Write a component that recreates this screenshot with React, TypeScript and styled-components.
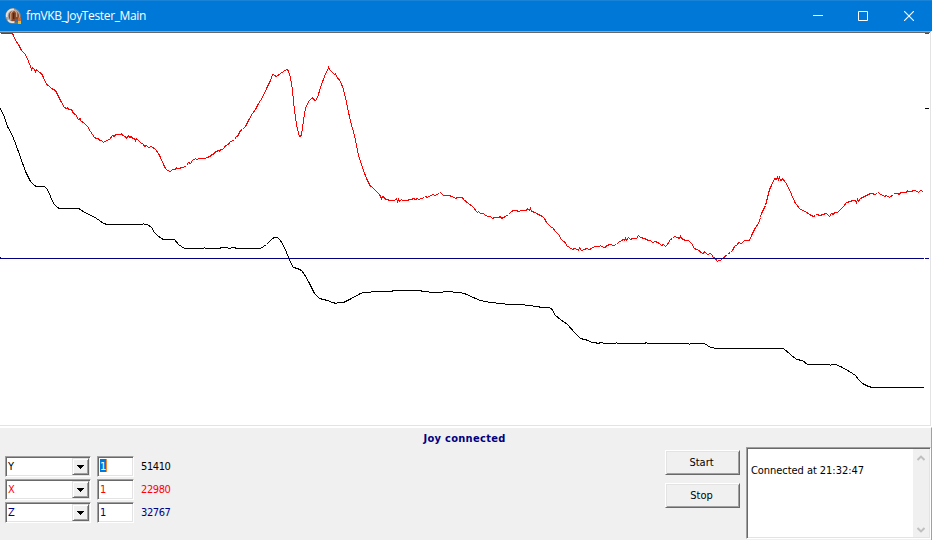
import React from "react";
import styled, { createGlobalStyle } from "styled-components";

const Global = createGlobalStyle`
  * { box-sizing: border-box; }
  html, body { margin: 0; padding: 0; overflow: hidden; }
`;

const Window = styled.div`
  width: 932px;
  height: 540px;
  display: flex;
  flex-direction: column;
  background: #fff;
  color: #000;
  font: 11px/13px Tahoma, "DejaVu Sans Condensed", "DejaVu Sans", sans-serif;
`;

const TitleBar = styled.header`
  height: 31px;
  flex: none;
  display: flex;
  align-items: center;
  background: #0078d7;
  border-top: 1px solid #1883d7;
  padding-left: 5px;
  color: #fff;
`;

const Title = styled.h1`
  flex: 1;
  margin: 0 0 0 4px;
  font: 400 12px/16px "Segoe UI", "Open Sans", sans-serif;
  letter-spacing: -0.36px;
`;

const Caption = styled.button`
  width: 46px;
  height: 29px;
  padding: 0;
  border: 0;
  background: none;
  display: flex;
  align-items: center;
  justify-content: center;
`;

const CaptionGroup = styled.div`
  display: flex;
`;

const PlotArea = styled.main`
  height: 396px;
  flex: none;
  background: #fff;
  svg { display: block; }
`;

const Panel = styled.section`
  height: 113px;
  flex: none;
  border-top: 1px solid #fff;
  border-right: 1px solid #a0a0a0;
  background: #f0f0f0;
`;

const Status = styled.div`
  height: 19px;
  padding: 4px 2px 0 0;
  text-align: center;
  font-weight: 700;
  letter-spacing: 0.3px;
  color: #000080;
`;

const Controls = styled.div`
  display: flex;
  align-items: flex-start;
`;

const AxisList = styled.div`
  width: 665px;
  padding: 9px 0 0 5px;
  display: flex;
  flex-direction: column;
  gap: 2px;
`;

const AxisRow = styled.div<{ $color: string }>`
  display: flex;
  height: 21px;
  color: ${(p) => p.$color};
`;

const Sunken = styled.div`
  border: 1px solid;
  border-color: #a0a0a0 #fff #fff #a0a0a0;
  box-shadow: inset 1px 1px #696969, inset -1px -1px #e3e3e3;
  background: #fff;
`;

const Combo = styled(Sunken)`
  width: 86px;
  padding: 1px;
  display: flex;
  justify-content: space-between;
`;

const ComboText = styled.span`
  padding: 2px 0 0 1px;
`;

const Arrow = styled.button`
  width: 17px;
  height: 17px;
  padding: 1px 0 0;
  border: 1px solid;
  border-color: #e3e3e3 #696969 #696969 #e3e3e3;
  box-shadow: inset 1px 1px #fff, inset -1px -1px #a0a0a0;
  background: #f0f0f0;
  display: flex;
  align-items: center;
  justify-content: center;
`;

const Edit = styled(Sunken)`
  width: 37px;
  margin-left: 6px;
  padding: 2px 0 0 2px;
`;

const EditText = styled.span<{ $selected: boolean }>`
  display: block;
  width: 7px;
  height: 13px;
  line-height: 15px;
  color: ${(p) => (p.$selected ? "#fff" : "inherit")};
  background: ${(p) => (p.$selected ? "#0078d7" : "none")};
  border-right: 1px solid ${(p) => (p.$selected ? "#ff8728" : "transparent")};
`;

const Value = styled.span`
  padding: 4px 0 0 7px;
  letter-spacing: -0.4px;
`;

const Actions = styled.div`
  width: 81px;
  padding-top: 3px;
  display: flex;
  flex-direction: column;
  gap: 8px;
`;

const PushButton = styled.button`
  width: 75px;
  height: 25px;
  padding: 0 2px 1px 0;
  border: 1px solid;
  border-color: #fff #696969 #696969 #fff;
  box-shadow: inset 1px 1px #e3e3e3, inset -1px -1px #a0a0a0;
  background: #f0f0f0;
  color: #000;
  font: inherit;
`;

const Memo = styled(Sunken)`
  width: 185px;
  height: 92px;
  flex: none;
  padding: 1px;
  display: flex;
`;

const MemoText = styled.div`
  flex: 1;
  padding: 15px 0 0 3px;
  letter-spacing: -0.05px;
`;

const ScrollBar = styled.div`
  width: 16px;
  background: #f0f0f0;
  display: flex;
  flex-direction: column;
  align-items: center;
  justify-content: space-between;
  padding: 6px 1px 4px 0;
`;

const RED_TRACE =
  "0,33 12,33 13,35 15,40 18,44 21,50 25,54 28,61 30,66 31,69 32,67 34,69 35,71 36,69 39,72 41,73 43,77 46,84 48,85 51,88 55,90 58,96 61,102 64,107 66,108 67,107 68,109 71,109 73,113 75,114 78,119 80,118 80,120 84,123 87,126 90,131 94,137 96,138 98,138 99,140 101,140 103,142 106,140 109,139 112,135 114,136 115,134 120,134 121,133 122,135 125,136 126,138 128,135 129,137 131,136 132,138 134,138 135,140 136,138 140,142 143,144 144,146 146,145 148,147 151,146 155,149 158,153 160,157 163,164 165,168 167,170 170,171 172,169 175,169 176,167 177,168 183,167 186,165 188,162 190,163 192,160 195,158 196,159 199,158 205,158 206,157 210,156 211,154 213,154 214,152 218,150 219,151 220,149 222,149 224,147 225,145 228,144 229,142 234,139 236,136 237,136 240,130 242,129 245,126 248,120 252,113 255,109 258,103 262,97 267,86 270,80 272,74 273,74 274,75 276,76 280,73 283,71 286,69 287,69 288,71 290,77 292,90 294,110 296,124 298,133 299,136 300,136 301,134 303,120 305,108 308,101 311,98 312,97 313,99 315,100 317,97 320,87 324,76 328,67 329,69 334,74 335,73 336,76 340,81 343,89 346,102 350,121 354,135 358,155 363,170 366,178 370,186 371,186 374,189 379,194 381,198 382,196 384,197 385,199 387,199 389,200 391,200 394,200 396,198 397,201 398,199 399,201 401,199 402,200 407,200 409,199 411,199 413,198 415,199 417,198 418,199 421,198 424,197 425,196 427,197 430,195 433,194 434,195 439,193 440,192 443,195 448,195 452,196 455,198 457,197 462,197 463,199 468,203 472,206 477,212 478,211 480,213 483,213 485,215 488,216 490,216 492,218 494,217 498,217 500,216 501,218 505,216 508,214 511,211 513,210 516,210 518,211 521,210 526,210 527,208 529,210 530,208 531,211 535,212 536,213 540,215 542,216 544,218 546,222 551,227 552,227 555,231 558,234 561,239 563,241 565,242 566,245 569,247 572,249 574,248 577,249 578,250 579,247 581,250 584,249 586,248 589,249 591,248 594,246 596,246 599,246 600,245 603,247 605,247 606,245 610,244 613,245 616,244 618,242 621,240 623,239 624,240 625,238 626,240 628,237 630,239 632,238 636,238 638,235 640,237 644,238 648,240 650,240 652,242 655,241 659,243 661,245 663,244 665,246 667,244 670,239 672,238 674,236 677,237 679,238 680,236 681,238 685,240 688,240 691,243 694,248 696,249 699,250 700,252 703,253 704,251 707,254 710,253 711,254 713,257 714,257 717,261 718,260 720,260 722,258 727,254 728,253 730,252 732,250 734,246 737,244 738,242 741,243 744,240 746,240 749,240 751,235 753,231 755,227 758,223 760,217 761,213 765,205 767,197 769,189 771,185 774,178 776,179 777,177 778,179 779,177 780,180 781,180 782,178 785,182 787,185 791,194 795,203 800,209 805,211 809,214 811,215 813,216 815,215 816,214 820,215 822,214 826,213 829,216 831,213 833,214 834,212 837,212 843,206 846,202 850,201 852,200 855,200 856,202 857,199 858,201 860,198 862,197 866,195 870,193 872,193 874,194 877,193 878,192 880,194 883,195 884,196 886,195 889,197 893,194 894,193 897,193 899,194 900,192 906,192 907,190 908,191 911,191 913,190 915,190 918,192 920,190 923,191";

const BLACK_TRACE =
  "0,108 4,117 7,126 11,133 15,143 20,157 25,171 30,181 34,185 36,186 44,186 46,188 48,191 50,196 53,203 57,207 59,208 78,208 80,209 84,212 93,216 99,220 103,223 107,224 142,224 143,223 144,224 147,224 151,227 154,232 157,235 161,238 163,239 174,239 178,244 184,248 203,248 204,247 205,248 218,248 222,247 227,247 228,248 234,247 236,248 260,248 266,244 272,238 274,237 277,237 279,239 282,243 286,252 290,262 293,267 297,268 301,270 304,274 309,283 314,293 319,298 327,300 332,302 336,303 337,302 343,302 351,298 360,293 363,292 379,291 391,291 393,290 420,290 422,291 434,292 440,292 445,291 459,292 464,293 475,298 480,300 490,302 501,303 508,304 520,304 536,306 542,307 548,307 551,308 555,315 560,319 567,324 574,332 580,338 588,340 591,342 595,342 597,343 601,342 604,343 615,343 616,342 617,343 644,343 646,342 647,343 688,343 689,344 690,343 704,343 710,347 717,348 783,348 790,354 796,359 802,360 807,364 829,364 830,365 831,364 835,364 840,366 849,371 855,375 858,379 862,383 868,386 872,387 923,387";

function Plot() {
  return (
    <svg width="932" height="396" viewBox="0 31 932 396" shapeRendering="crispEdges">
      <rect x="0" y="31" width="931" height="1" fill="#a0a0a0" />
      <rect x="0" y="32" width="930" height="1" fill="#696969" />
      <rect x="930" y="32" width="1" height="394" fill="#e3e3e3" />
      <rect x="0" y="425" width="931" height="1" fill="#e3e3e3" />
      <g fill="none" strokeWidth="1" transform="translate(.5 .5)">
        <polyline points={BLACK_TRACE} stroke="#000" />
        <polyline points={RED_TRACE} stroke="#f00" />
      </g>
      <rect x="0" y="258" width="924" height="1" fill="#000080" />
      <rect x="0" y="257" width="1" height="1" fill="#000080" />
      <rect x="925" y="33" width="4" height="1" fill="#f00" />
      <rect x="925" y="108" width="4" height="1" fill="#000" />
      <rect x="925" y="258" width="4" height="1" fill="#000080" />
    </svg>
  );
}

function AppIcon() {
  return (
    <svg width="17" height="17" viewBox="0 0 17 17">
      <circle cx="8" cy="8" r="7.5" fill="#a8a9ad" stroke="#77787a" />
      <path d="M2 9A6 6 0 0 1 9 1.5" fill="none" stroke="#dfe4e8" strokeWidth="1.8" />
      <circle cx="8.8" cy="8" r="5.2" fill="#8a4727" />
      <path d="M5.8 12V5.5Q9-.2 11.7 5V9" fill="none" stroke="#d8ae90" strokeWidth="1.1" />
      <path d="M8.7 5v6" stroke="#4d261c" strokeWidth="1.5" />
      <path d="M3 12q2 3 6 2" stroke="#e8e8e8" fill="none" strokeWidth="1.5" />
      <path d="M10 11h3v3h-3z" fill="#316bb1" />
      <path d="M13 10h3v3h-3z" fill="#c56b3c" />
      <path d="M13 13h3v3h-3z" fill="#dec12f" />
      <path d="M10 14h3v2h-3z" fill="#6b735b" />
    </svg>
  );
}

function Chevron({ down = false }: { down?: boolean }) {
  return (
    <svg width="8" height="6" viewBox="0 0 8 6">
      <path d={down ? "M.5 1 4 4.4 7.5 1" : "M.5 5 4 1.6 7.5 5"} fill="none" stroke="#bfbfbf" strokeWidth="2" />
    </svg>
  );
}

const axes = [
  { name: "Y", color: "#000", value: "51410", selected: true },
  { name: "X", color: "#f00", value: "22980", selected: false },
  { name: "Z", color: "#000080", value: "32767", selected: false },
];

export default function App() {
  return (
    <Window>
      <Global />
      <TitleBar>
        <AppIcon />
        <Title>fmVKB_JoyTester_Main</Title>
        <CaptionGroup>
          <Caption aria-label="Minimize">
            <svg width="12" height="10"><path d="M2 4.5h10" stroke="#fff" /></svg>
          </Caption>
          <Caption aria-label="Maximize">
            <svg width="10" height="10"><path d="M.5.5h9v9h-9z" stroke="#fff" fill="none" /></svg>
          </Caption>
          <Caption aria-label="Close">
            <svg width="10" height="10"><path d="m0 0 10 10M10 0 0 10" stroke="#fff" strokeWidth="1.1" /></svg>
          </Caption>
        </CaptionGroup>
      </TitleBar>
      <PlotArea><Plot /></PlotArea>
      <Panel>
        <Status>Joy connected</Status>
        <Controls>
          <AxisList>
            {axes.map((a) => (
              <AxisRow key={a.name} $color={a.color}>
                <Combo>
                  <ComboText>{a.name}</ComboText>
                  <Arrow aria-label={`Select axis ${a.name}`}>
                    <svg width="7" height="4" shapeRendering="crispEdges">
                      <path d="M0 0h7v1H0zM1 1h5v1H1zM2 2h3v1H2zM3 3h1v1H3z" />
                    </svg>
                  </Arrow>
                </Combo>
                <Edit><EditText $selected={a.selected}>1</EditText></Edit>
                <Value>{a.value}</Value>
              </AxisRow>
            ))}
          </AxisList>
          <Actions>
            <PushButton>Start</PushButton>
            <PushButton>Stop</PushButton>
          </Actions>
          <Memo>
            <MemoText>Connected at 21:32:47</MemoText>
            <ScrollBar><Chevron /><Chevron down /></ScrollBar>
          </Memo>
        </Controls>
      </Panel>
    </Window>
  );
}
